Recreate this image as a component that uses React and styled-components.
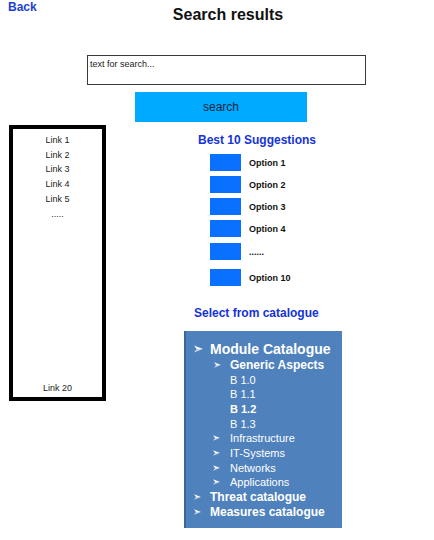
import React from "react";
import styled, { createGlobalStyle } from "styled-components";

const Global = createGlobalStyle`
  html, body { margin: 0; padding: 0; background: #ffffff; }
  body { font-family: "Liberation Sans", Arial, sans-serif; }
`;

const Page = styled.div`
  width: 434px;
  height: 540px;
  display: flex;
  flex-direction: column;
  overflow: hidden;
`;

const Header = styled.div`
  display: grid;
  grid-template-columns: 100px 1fr 100px;
  align-items: start;
  height: 52px;
`;

const BackLink = styled.a`
  margin: 0 0 0 8px;
  font-size: 12px;
  line-height: 14px;
  font-weight: bold;
  color: #1c3fd6;
  text-decoration: none;
  cursor: pointer;
`;

const Title = styled.h1`
  margin: 6px 0 0 0;
  font-size: 16px;
  line-height: 18px;
  font-weight: bold;
  color: #111;
  text-align: center;
  transform: translateX(11px);
`;

const SearchBlock = styled.div`
  display: flex;
  flex-direction: column;
  gap: 7px;
  margin-top: 3px;
`;

const SearchInput = styled.div`
  margin-left: 87px;
  width: 279px;
  height: 30px;
  box-sizing: border-box;
  border: 1px solid #3a3a3a;
  font-size: 9px;
  line-height: 11px;
  color: #222;
  padding: 3px 0 0 2px;
`;

const SearchButton = styled.button`
  margin-left: 135px;
  width: 172px;
  height: 30px;
  border: none;
  background: #00aaff;
  color: #14253a;
  font-family: "Liberation Sans", Arial, sans-serif;
  font-size: 12px;
  padding: 0;
  cursor: pointer;
`;

const Main = styled.div`
  display: flex;
  margin-top: 3px;
`;

const LinkPanel = styled.nav`
  margin-left: 9px;
  width: 97px;
  height: 276px;
  box-sizing: border-box;
  border: 4px solid #000;
  display: flex;
  flex-direction: column;
  align-items: center;
  padding: 4px 0 1px;
`;

const PanelLink = styled.span`
  font-size: 9px;
  line-height: 14.7px;
  color: #222;
  margin-top: ${(p) => (p.$bottom ? "auto" : "0")};
`;

const Right = styled.div`
  margin-left: 78px;
  display: flex;
  flex-direction: column;
  width: 160px;
`;

const SectionTitle = styled.h2`
  margin: ${(p) => p.$mt}px 0 0 ${(p) => p.$ml}px;
  font-size: 12px;
  line-height: 14px;
  font-weight: bold;
  color: #1533d8;
`;

const OptionList = styled.div`
  display: flex;
  flex-direction: column;
  margin: 7px 0 0 26px;
`;

const OptionRow = styled.div`
  display: flex;
  align-items: center;
  gap: 8px;
  margin-top: ${(p) => p.$mt}px;
`;

const OptionBox = styled.div`
  width: 31px;
  height: 17px;
  background: #0a70ff;
`;

const OptionText = styled.span`
  font-size: 9px;
  font-weight: bold;
  color: #111;
`;

const Catalogue = styled.div`
  margin-top: 11px;
  width: 158px;
  height: 197px;
  box-sizing: border-box;
  background: #4f81bd;
  border-left: 2px solid #3d6698;
  padding: 9px 0 0 0;
  color: #ffffff;
  display: flex;
  flex-direction: column;
`;

const CatRow = styled.div`
  display: flex;
  align-items: center;
  padding-left: ${(p) => p.$indent}px;
  height: ${(p) => p.$h}px;
  font-size: ${(p) => p.$size}px;
  font-weight: ${(p) => (p.$bold ? "bold" : "normal")};
  white-space: nowrap;
`;

const ArrowSlot = styled.span`
  display: inline-flex;
  align-items: center;
  width: ${(p) => p.$w}px;
  flex: none;
`;

function Arrow({ w = 17, size = 6 }) {
  return (
    <ArrowSlot $w={w}>
      <svg width={size + 1} height={size} viewBox="0 0 10 8">
        <polygon points="0,0 10,4 3,4" fill="#ffffff" />
        <polygon points="0,8 10,4 3,4" fill="#cdd6e6" />
      </svg>
    </ArrowSlot>
  );
}

const links = ["Link 1", "Link 2", "Link 3", "Link 4", "Link 5", "....."];
const options = [
  ["Option 1", 0],
  ["Option 2", 5],
  ["Option 3", 5],
  ["Option 4", 5],
  ["......", 6],
  ["Option 10", 9],
];

export default function App() {
  return (
    <Page>
      <Global />
      <Header>
        <BackLink>Back</BackLink>
        <Title>Search results</Title>
        <div />
      </Header>
      <SearchBlock>
        <SearchInput>text for search...</SearchInput>
        <SearchButton>search</SearchButton>
      </SearchBlock>
      <Main>
        <LinkPanel>
          {links.map((l) => (
            <PanelLink key={l}>{l}</PanelLink>
          ))}
          <PanelLink $bottom>Link 20</PanelLink>
        </LinkPanel>
        <Right>
          <SectionTitle $mt={8} $ml={14}>Best 10 Suggestions</SectionTitle>
          <OptionList>
            {options.map(([t, mt]) => (
              <OptionRow key={t} $mt={mt}>
                <OptionBox />
                <OptionText>{t}</OptionText>
              </OptionRow>
            ))}
          </OptionList>
          <SectionTitle $mt={20} $ml={10}>Select from catalogue</SectionTitle>
          <Catalogue>
            <CatRow $indent={8} $h={17} $size={14} $bold>
              <Arrow w={16} size={8} />Module Catalogue
            </CatRow>
            <CatRow $indent={28} $h={15.5} $size={12} $bold>
              <Arrow w={16} size={6} />Generic Aspects
            </CatRow>
            <CatRow $indent={44} $h={14.67} $size={11}>B 1.0</CatRow>
            <CatRow $indent={44} $h={14.67} $size={11}>B 1.1</CatRow>
            <CatRow $indent={44} $h={14.67} $size={11} $bold>B 1.2</CatRow>
            <CatRow $indent={44} $h={14.67} $size={11}>B 1.3</CatRow>
            {["Infrastructure", "IT-Systems", "Networks", "Applications"].map((t) => (
              <CatRow key={t} $indent={27} $h={14.67} $size={11}>
                <Arrow w={17} size={6} />{t}
              </CatRow>
            ))}
            <CatRow $indent={8} $h={14.67} $size={12} $bold>
              <Arrow w={16} size={6} />Threat catalogue
            </CatRow>
            <CatRow $indent={8} $h={14.67} $size={12} $bold>
              <Arrow w={16} size={6} />Measures catalogue
            </CatRow>
          </Catalogue>
        </Right>
      </Main>
    </Page>
  );
}
